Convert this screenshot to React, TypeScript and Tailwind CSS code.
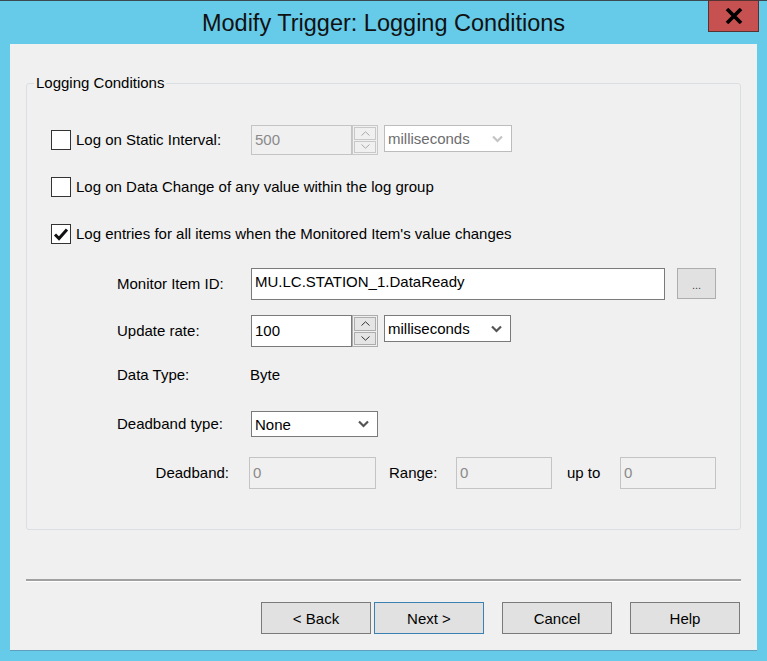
import React from "react";

function Chevron({ color = "#444", w = 11 }: { color?: string; w?: number }) {
  return (
    <svg width={w} height="8" viewBox="0 0 11 8">
      <path d="M1 1.5 L5.5 6 L10 1.5" fill="none" stroke={color} strokeWidth="2.2" />
    </svg>
  );
}

function Checkbox({ checked }: { checked?: boolean }) {
  return (
    <div className="w-[20px] h-[20px] border border-[#333333] bg-white flex items-center justify-center shrink-0">
      {checked && (
        <svg width="16" height="14" viewBox="0 0 16 14">
          <path d="M2 7.5 L6 11.5 L14 2.5" fill="none" stroke="#111" strokeWidth="3" />
        </svg>
      )}
    </div>
  );
}

function Spin({ disabled }: { disabled?: boolean }) {
  const border = disabled ? "border-[#c8c8c8]" : "border-[#adadad]";
  const bg = disabled ? "bg-[#f0f0f0]" : "bg-[#e5e5e5]";
  const glyph = disabled ? "#a8a8a8" : "#333";
  return (
    <div className={`w-[26px] h-full flex flex-col gap-px border ${border} bg-[#f0f0f0] p-px`}>
      <div className={`flex-1 border ${border} ${bg} flex items-center justify-center`}>
        <svg width="9" height="5" viewBox="0 0 9 5">
          <path d="M0.5 4.5 L4.5 0.8 L8.5 4.5" fill="none" stroke={glyph} strokeWidth="1" />
        </svg>
      </div>
      <div className={`flex-1 border ${border} ${bg} flex items-center justify-center`}>
        <svg width="9" height="5" viewBox="0 0 9 5">
          <path d="M0.5 0.5 L4.5 4.2 L8.5 0.5" fill="none" stroke={glyph} strokeWidth="1" />
        </svg>
      </div>
    </div>
  );
}

function Select({ value, width, disabled }: { value: string; width: string; disabled?: boolean }) {
  return (
    <div
      className={`${width} h-full bg-white border flex items-center justify-between pl-[3px] pr-[8px] ${
        disabled ? "border-[#bcbcbc] text-[#6d6d6d]" : "border-[#7a7a7a] text-black"
      }`}
    >
      <span className="pt-[2px]">{value}</span>
      <Chevron color={disabled ? "#c4c4c4" : "#555"} />
    </div>
  );
}

function TextBox({ value, width, disabled, top = "pt-[4px]" }: { value: string; width: string; disabled?: boolean; top?: string }) {
  return (
    <div
      className={`${width} h-full border flex items-start pl-[3px] ${top} ${
        disabled ? "bg-[#f0f0f0] border-[#c4c4c4] text-[#8a8a8a]" : "bg-white border-[#7a7a7a] text-black"
      }`}
    >
      {value}
    </div>
  );
}

function Button({ label, primary }: { label: string; primary?: boolean }) {
  return (
    <button
      className={`w-[110px] h-[32px] bg-[#e1e1e1] border flex items-center justify-center pt-[2px] text-black ${
        primary ? "border-[#3c7fb1]" : "border-[#7a7a7a]"
      }`}
    >
      {label}
    </button>
  );
}

export default function App() {
  return (
    <div
      className="w-[767px] h-[661px] bg-[#66cae9] flex flex-col border-t border-[#3b4a52] text-[15px] text-black"
      style={{ fontFamily: '"Liberation Sans", Arial, sans-serif' }}
    >
      <div className="relative h-[43px] flex items-center justify-center shrink-0">
        <span className="text-[23.5px] text-[#111] pt-[2px]">Modify Trigger: Logging Conditions</span>
        <div className="absolute right-[8px] top-[-1px] w-[51px] h-[32px] bg-[#c75050] border border-[#553333] flex items-center justify-center">
          <svg width="18" height="16" viewBox="0 0 18 16">
            <path d="M2 1 L16 15 M16 1 L2 15" stroke="#000" strokeWidth="3.6" />
          </svg>
        </div>
      </div>

      <div className="mx-[10px] h-[607px] bg-[#f0f0f0] border-b border-[#5e9fbe] px-[16px] pt-[39px] flex flex-col">
        <div className="relative h-[447px] border border-[#dadfe3] rounded-[3px] pl-[24px] pt-[41px] flex flex-col">
          <span className="absolute left-[7px] top-[-10px] bg-[#f0f0f0] px-[2px] leading-[18px]">
            Logging Conditions
          </span>

          <div className="h-[30px] flex items-center">
            <Checkbox />
            <span className="ml-[5px] w-[175px]">Log on Static Interval:</span>
            <TextBox value="500" width="w-[101px]" disabled top="pt-[3px]" />
            <Spin disabled />
            <div className="ml-[6px] h-[27px] self-start">
              <Select value="milliseconds" width="w-[128px]" disabled />
            </div>
          </div>

          <div className="mt-[18px] h-[28px] flex items-center">
            <Checkbox />
            <span className="ml-[5px]">Log on Data Change of any value within the log group</span>
          </div>

          <div className="mt-[19px] h-[28px] flex items-center">
            <Checkbox checked />
            <span className="ml-[5px]">Log entries for all items when the Monitored Item's value changes</span>
          </div>

          <div className="pl-[66px] flex flex-col">
            <div className="mt-[20px] h-[32px] flex items-center">
              <span className="w-[134px]">Monitor Item ID:</span>
              <TextBox value="MU.LC.STATION_1.DataReady" width="w-[414px]" top="pt-[2px]" />
              <div className="ml-[12px] w-[39px] h-[31px] self-start bg-[#e1e1e1] border border-[#adadad] flex items-center justify-center text-[11px] text-[#444] pt-[4px]">
                ...
              </div>
            </div>

            <div className="mt-[15px] h-[32px] flex items-center">
              <span className="w-[134px]">Update rate:</span>
              <TextBox value="100" width="w-[101px]" />
              <Spin />
              <div className="ml-[6px] h-[27px] self-start">
                <Select value="milliseconds" width="w-[127px]" />
              </div>
            </div>

            <div className="mt-[14px] h-[28px] flex items-center">
              <span className="w-[133px]">Data Type:</span>
              <span>Byte</span>
            </div>

            <div className="mt-[22px] h-[26px] flex items-center">
              <span className="w-[134px]">Deadband type:</span>
              <Select value="None" width="w-[127px]" />
            </div>

            <div className="mt-[20px] h-[32px] flex items-center">
              <span className="w-[112px] text-right">Deadband:</span>
              <div className="ml-[20px] h-full">
                <TextBox value="0" width="w-[127px]" disabled />
              </div>
              <span className="ml-[13px] w-[67px]">Range:</span>
              <TextBox value="0" width="w-[96px]" disabled />
              <span className="ml-[15px] w-[53px]">up to</span>
              <TextBox value="0" width="w-[96px]" disabled />
            </div>
          </div>
        </div>

        <div className="mt-[49px] h-[3px] border-t-2 border-[#a0a0a0] border-b border-b-white" />

        <div className="mt-[20px] flex justify-end pr-[1px]">
          <div className="flex">
            <Button label="< Back" />
            <div className="ml-[3px]">
              <Button label="Next >" primary />
            </div>
            <div className="ml-[18px]">
              <Button label="Cancel" />
            </div>
            <div className="ml-[18px]">
              <Button label="Help" />
            </div>
          </div>
        </div>
      </div>
    </div>
  );
}
